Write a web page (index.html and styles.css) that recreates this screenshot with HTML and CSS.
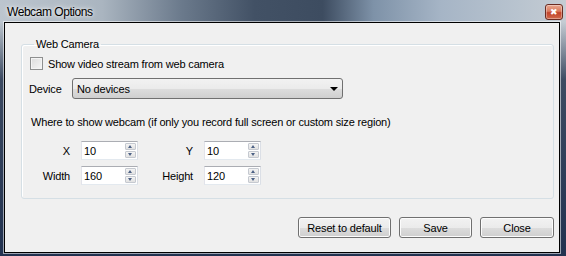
FILE: index.html
```html
<!DOCTYPE html>
<html lang="en">
<head>
    <meta charset="UTF-8">
    <title>Webcam Options</title>
    <link rel="stylesheet" href="styles.css">
</head>
<body>
    <div class="window">
        <div class="titlebar">
            <span class="title">Webcam Options</span>
            <span class="close-btn">&#x2716;</span>
        </div>

        <div class="client">
            <fieldset class="group">
                <legend>Web Camera</legend>

                <label class="check-row">
                    <span class="checkbox"></span>
                    <span>Show video stream from web camera</span>
                </label>

                <div class="device-row">
                    <span class="device-label">Device</span>
                    <div class="combo">
                        <span>No devices</span>
                        <span class="combo-arrow"></span>
                    </div>
                </div>

                <div class="hint">Where to show webcam (if only you record full screen or custom size region)</div>

                <div class="coords">
                    <span class="coord-label">X</span>
                    <div class="spin"><span class="spin-value">10</span><span class="spin-btns"><span class="up"></span><span class="down"></span></span></div>
                    <span class="coord-label">Y</span>
                    <div class="spin"><span class="spin-value">10</span><span class="spin-btns"><span class="up"></span><span class="down"></span></span></div>
                    <span class="coord-label">Width</span>
                    <div class="spin"><span class="spin-value">160</span><span class="spin-btns"><span class="up"></span><span class="down"></span></span></div>
                    <span class="coord-label">Height</span>
                    <div class="spin"><span class="spin-value">120</span><span class="spin-btns"><span class="up"></span><span class="down"></span></span></div>
                </div>
            </fieldset>

            <div class="actions">
                <button class="btn btn-reset">Reset to default</button>
                <button class="btn btn-save">Save</button>
                <button class="btn btn-close">Close</button>
            </div>
        </div>
    </div>
</body>
</html>
```

FILE: styles.css
```css
body {
    margin: 0;
    width: 566px;
    height: 256px;
    overflow: hidden;
    font-family: "Liberation Sans", Arial, sans-serif;
    font-size: 11px;
    letter-spacing: -0.17px;
    color: #000;
}
.window {
    height: 256px;
    box-sizing: border-box;
    padding: 0 6px 3px 4px;
    background:
        linear-gradient(180deg, rgba(37,52,78,0) 0px, rgba(37,52,78,0) 22px, rgba(37,52,78,0.85) 80px, #223250 100%),
        linear-gradient(90deg, #bcc5ce 0%, #aab5c0 18%, #6b7a8c 32%, #425165 45%, #3d4c60 57%, #7e92a8 66%, #a6b5c6 78%, #b9c4cf 92%, #c5ccd3 100%);
}
.titlebar {
    height: 22px;
    display: flex;
    align-items: center;
    justify-content: space-between;
}
.title {
    font-size: 12px;
    letter-spacing: -0.45px;
    margin-left: 3px;
    margin-top: 1px;
    color: #000;
    text-shadow: 0 0 6px rgba(255,255,255,0.9), 0 0 3px rgba(255,255,255,0.8);
}
.close-btn {
    width: 16px;
    height: 14px;
    margin-right: -3px;
    margin-top: 2px;
    border: 1px solid #6b2c22;
    border-radius: 3px;
    background: linear-gradient(180deg, #eaa890 0%, #d97a5e 45%, #c2432a 55%, #d06a4c 100%);
    color: #fff;
    font-size: 9px;
    line-height: 14px;
    text-align: center;
    letter-spacing: 0;
    box-shadow: inset 0 0 0 1px rgba(255,255,255,0.35);
}
.client {
    height: 231px;
    box-sizing: border-box;
    border: 1px solid #000;
    box-shadow: 0 0 0 1px rgba(255,255,255,0.55);
    background: #f0f0f0;
    padding: 15px 5px 0 16px;
}
.group {
    margin: 0;
    padding: 6px 8px 13px 8px;
    border: 1px solid #d5dfe5;
    border-radius: 3px;
    box-shadow: inset 1px 1px 0 #fff;
}
.group legend {
    padding: 0 2px;
    margin-left: 4px;
    line-height: 13px;
}
.check-row {
    display: flex;
    align-items: center;
    gap: 5px;
    height: 13px;
}
.checkbox {
    width: 11px;
    height: 11px;
    border: 1px solid #8e8f8f;
    background: linear-gradient(135deg, #dcdcdc 0%, #f6f6f6 100%);
    box-shadow: inset 0 0 0 1px #f4f4f4;
}
.device-row {
    display: flex;
    align-items: center;
    margin-top: 8px;
    margin-left: -1px;
}
.device-label {
    width: 43px;
}
.combo {
    width: 261px;
    height: 19px;
    border: 1px solid #707070;
    border-radius: 3px;
    background: linear-gradient(180deg, #f2f2f2 0%, #ebebeb 50%, #dddddd 51%, #cfcfcf 100%);
    display: flex;
    align-items: center;
    justify-content: space-between;
    padding: 0 4px 0 4px;
}
.combo-arrow {
    width: 0;
    height: 0;
    border-left: 4px solid transparent;
    border-right: 4px solid transparent;
    border-top: 4px solid #000;
    margin-right: 0;
}
.hint {
    margin-top: 17px;
    margin-left: 1px;
    line-height: 13px;
}
.coords {
    display: grid;
    grid-template-columns: 51px 57px 66px 57px;
    row-gap: 6px;
    margin-top: 12px;
}
.coord-label {
    text-align: right;
    padding-right: 11px;
    align-self: center;
}
.spin {
    height: 17px;
    border: 1px solid #abadb3;
    border-right-color: #dbdfe6;
    border-bottom-color: #e3e9ef;
    border-left-color: #e2e3ea;
    background: #fff;
    display: flex;
    justify-content: space-between;
    align-items: center;
}
.spin-value {
    padding-left: 2px;
}
.spin-btns {
    display: flex;
    flex-direction: column;
    gap: 1px;
    margin-right: 1px;
}
.spin-btns span {
    width: 11px;
    height: 7px;
    background: linear-gradient(180deg, #f4f4f4 0%, #e2e2e2 100%);
    border: 1px solid #c5c9d0;
    border-radius: 1px;
    box-sizing: border-box;
    position: relative;
}
.spin-btns span::after {
    content: '';
    position: absolute;
    left: 2px;
    width: 0;
    height: 0;
    border-left: 2.5px solid transparent;
    border-right: 2.5px solid transparent;
}
.spin-btns .up::after {
    top: 1px;
    border-bottom: 3px solid #4d6185;
}
.spin-btns .down::after {
    top: 1px;
    border-top: 3px solid #4d6185;
}
.actions {
    display: flex;
    justify-content: flex-end;
    gap: 8px;
    margin-top: 18px;
}
.btn {
    height: 21px;
    border: 1px solid #707070;
    border-radius: 3px;
    background: linear-gradient(180deg, #f2f2f2 0%, #ebebeb 50%, #dddddd 51%, #cfcfcf 100%);
    box-shadow: inset 0 0 0 1px #fcfcfc;
    font-family: "Liberation Sans", Arial, sans-serif;
    font-size: 11px;
    letter-spacing: -0.17px;
    color: #000;
    padding: 0;
}
.btn-reset { width: 93px; }
.btn-save { width: 73px; }
.btn-close { width: 74px; }
```
